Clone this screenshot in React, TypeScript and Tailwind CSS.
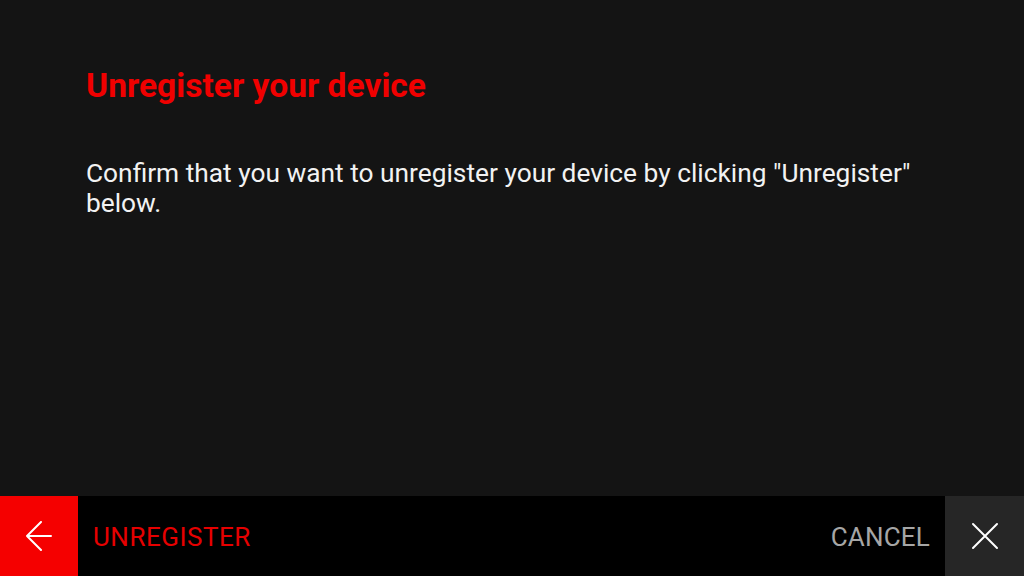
export default function App() {
  return (
    <div
      className="w-[1024px] h-[576px] flex flex-col bg-[#141414] overflow-hidden"
      style={{ fontFamily: "Roboto, 'Liberation Sans', sans-serif" }}
    >
      <div className="flex-1 pl-[86px] pr-[80px] pt-[66px]">
        <h1 className="text-[33.6px] leading-[40px] font-bold text-[#f00000]">
          Unregister your device
        </h1>
        <p className="mt-[52px] text-[26.3px] leading-[30px] text-[#f2f2f2]">
          Confirm that you want to unregister your device by clicking "Unregister" below.
        </p>
      </div>
      <div className="h-[80px] flex bg-black">
        <button className="w-[78px] h-full bg-[#f50000] flex items-center justify-center">
          <svg width="26" height="30" viewBox="0 0 26 30" fill="none" stroke="white" strokeWidth="2" strokeLinecap="round" strokeLinejoin="round">
            <path d="M1 15h24M15 1L1 15l14 14" />
          </svg>
        </button>
        <button className="pl-[15px] pt-[2px] text-[26px] text-[#e60000] tracking-[0.5px]">UNREGISTER</button>
        <div className="flex-1" />
        <button className="pr-[15px] pt-[2px] text-[26px] text-[#a6a6a6] tracking-[0.2px]">CANCEL</button>
        <button className="w-[79px] h-full bg-[#262626] flex items-center justify-center">
          <svg width="28" height="28" viewBox="0 0 28 28" fill="none" stroke="white" strokeWidth="2" strokeLinecap="round">
            <path d="M2 2l24 24M26 2L2 26" />
          </svg>
        </button>
      </div>
    </div>
  );
}
